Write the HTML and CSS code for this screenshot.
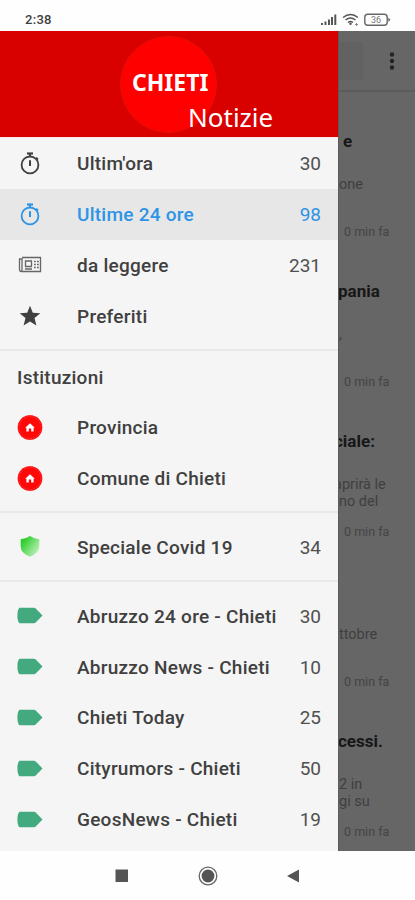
FILE: index.html
```html
<!DOCTYPE html>
<html lang="it">
<head>
<meta charset="utf-8">
<title>Chieti Notizie</title>
<link rel="stylesheet" href="styles.css">
</head>
<body>
<svg class="defs" width="0" height="0" aria-hidden="true">
  <defs>
    <linearGradient id="green" x1="0" y1="0" x2="1" y2="0.8"><stop offset="0.2" stop-color="#2dce2d"/><stop offset="1" stop-color="#c9f2c4"/></linearGradient>
    <symbol id="timer" viewBox="0 0 26 26"><g fill="none" stroke="currentColor"><circle cx="13" cy="14.900" r="8.400" stroke-width="1.800"/><path d="M10 3.500h6" stroke-width="2.200"/><path d="M13 3.500v3" stroke-width="2"/><path d="M13 10.300v5.600" stroke-width="2"/><path d="M19 7.700l2 1.800" stroke-width="2"/></g></symbol>
    <symbol id="home" viewBox="0 0 26 26"><circle cx="13" cy="12.500" r="12.500" fill="#f99"/><circle cx="13" cy="12.500" r="12.200" fill="#fe0808"/><circle cx="13" cy="12.500" r="11" fill="none" stroke="#ff5b5b" stroke-width=".5" stroke-dasharray="2 1"/><path d="M13 8.300l4.800 4.400h-1.200v3.900h-2.400v-3h-2.400v3H9.400v-3.900H8.200z" fill="#fff"/></symbol>
    <symbol id="tag" viewBox="0 0 26 26"><path d="M2.500 4.700H17q1 0 1.700.7l6.800 7.100-6.800 7.100q-.7.700-1.700.7H2.500Q.4 18.500.4 12.500t2.100-7.800z" fill="#42aa7e"/></symbol>
  </defs>
</svg>
<header class="status">
  <span class="clock">2:38</span>
  <svg class="status-icons" width="72" height="16" viewBox="0 0 72 16">
    <g fill="#555"><path d="M1 12h2v2H1z" /><path d="M4.500 10.500h2V14h-2z"/><path d="M8 8.500h2V14H8z"/><path d="M11 6h2v8h-2z"/><path d="M14.300 3.500h2V14h-2z"/></g>
    <g fill="none" stroke="#555" stroke-width="1.500"><path d="M23 6.500q7.500-6 15 0"/><path d="M25.500 9q5-4 10 0"/><path d="M28 11.500q2.500-2 5 0"/></g><circle cx="30.500" cy="12.700" r="1.200" fill="#555"/><path d="M36.500 12v3M35 13.500h3" stroke="#888"/>
    <rect x="44.800" y="3.300" width="22.400" height="11" rx="3" fill="none" stroke="#666" stroke-width="1.400"/><path d="M68.300 6.500l2.200 2.300-2.200 2.300z" fill="#666"/>
    <text x="56" y="12" class="battery">36</text>
  </svg>
</header>
<main class="screen">
  <nav class="drawer">
    <div class="brand"><div class="disc"><span class="city">CHIETI</span><span class="news">Notizie</span></div></div>
    <ul class="menu primary">
      <li class="item"><svg class="icon"><use href="#timer"/></svg><span>Ultim'ora</span><b class="count">30</b></li>
      <li class="item active"><svg class="icon"><use href="#timer"/></svg><span>Ultime 24 ore</span><b class="count">98</b></li>
      <li class="item"><svg class="icon" viewBox="0 0 26 26"><g fill="none" stroke="#666" stroke-width="1.300"><path d="M5 5.500h18.500v14H4.500q-2 0-2-2V7H5v10.500q0 2-1 2"/><path d="M8.500 9h6v5.500h-6z"/><path d="M17 9.500h1.800M20 9.500h1.800M17 12.500h1.800M20 12.500h1.800M17 15.500h1.800M20 15.500h1.800M8 17h7"/></g></svg><span>da leggere</span><b class="count">231</b></li>
      <li class="item"><svg class="icon" viewBox="0 0 26 26"><path d="M13 2.800l2.800 7 7.500.5-5.800 4.800 1.900 7.300L13 18.400l-6.400 4 1.900-7.300-5.800-4.800 7.500-.5z" fill="currentColor"/></svg><span>Preferiti</span></li>
    </ul>
    <ul class="menu institutions">
      <li class="heading">Istituzioni</li>
      <li class="item"><svg class="icon"><use href="#home"/></svg><span>Provincia</span></li>
      <li class="item"><svg class="icon"><use href="#home"/></svg><span>Comune di Chieti</span></li>
    </ul>
    <ul class="menu special">
      <li class="item"><svg class="icon" viewBox="0 0 26 26"><path d="M13 2q3.500 2.600 9.300 3.200v7q0 7-9.300 10.500-9.300-3.500-9.300-10.500v-7Q9.500 4.600 13 2z" fill="url(#green)"/></svg><span>Speciale Covid 19</span><b class="count">34</b></li>
    </ul>
    <ul class="menu sources">
      <li class="item"><svg class="icon"><use href="#tag"/></svg><span>Abruzzo 24 ore - Chieti</span><b class="count">30</b></li>
      <li class="item"><svg class="icon"><use href="#tag"/></svg><span>Abruzzo News - Chieti</span><b class="count">10</b></li>
      <li class="item"><svg class="icon"><use href="#tag"/></svg><span>Chieti Today</span><b class="count">25</b></li>
      <li class="item"><svg class="icon"><use href="#tag"/></svg><span>Cityrumors - Chieti</span><b class="count">50</b></li>
      <li class="item"><svg class="icon"><use href="#tag"/></svg><span>GeosNews - Chieti</span><b class="count">19</b></li>
    </ul>
  </nav>
  <section class="feed">
    <div class="toolbar"><span class="field"></span><svg width="8" height="22" viewBox="0 0 8 22" fill="#242424"><circle cx="4" cy="4.500" r="2.200"/><circle cx="4" cy="11" r="2.200"/><circle cx="4" cy="17.500" r="2.200"/></svg></div>
    <article class="story"><h2 class="in">e</h2><p>one</p><time>0 min fa</time></article>
    <article class="story"><h2>pania</h2><p>,</p><time>0 min fa</time></article>
    <article class="story"><h2 class="out">ciale:</h2><p class="out">aprirà le<br>rno del</p><time>0 min fa</time></article>
    <article class="story"><h2></h2><p>ttobre</p><time>0 min fa</time></article>
    <article class="story"><h2>cessi.</h2><p>2 in<br>gi su</p><time>0 min fa</time></article>
  </section>
</main>
<footer class="navbar">
  <svg width="14" height="14"><rect x="0.500" y="0.500" width="12.500" height="12.500" fill="#555"/></svg>
  <svg width="20" height="20"><circle cx="10" cy="10" r="8.800" fill="none" stroke="#666" stroke-width="1.300"/><circle cx="10" cy="10" r="6.400" fill="#555"/></svg>
  <svg width="14" height="14"><path d="M13 0.500v13L1 7z" fill="#555"/></svg>
</footer>
</body>
</html>
```
FILE: styles.css
```css
* { box-sizing: border-box; }
body { margin: 0; width: 415px; height: 900px; overflow: hidden; background: #fefefe; font-family: Roboto, "Liberation Sans", sans-serif; color: #404040; }
ul, h2, p { margin: 0; padding: 0; list-style: none; }
.defs { position: absolute; }
.status { height: 31px; padding: 9px 23px 0 25px; display: flex; justify-content: space-between; align-items: center; }
.clock { font-size: 13px; font-weight: 500; line-height: 20px; letter-spacing: .3px; }
.status-icons { margin-bottom: 3px; }
.battery { font-size: 9px; text-anchor: middle; fill: #777; }
.screen { height: 820px; display: grid; grid-template-columns: 338px 77px; overflow: hidden; }
.drawer { height: 820px; background: #f5f5f5; overflow: hidden; }
.brand { height: 107px; background: #d90000; padding: 5px 0 0 120px; border-bottom: 1px solid #ffe9e9; }
.disc { width: 97px; height: 97px; border-radius: 50%; background: #fe0000; border: 1px solid #e41005; color: #fff; white-space: nowrap; display: flex; flex-direction: column; }
.city { font: 700 23px/28px "Noto Sans", sans-serif; margin: 31px 0 0 11px; }
.news { font: 400 26px/32px "Noto Sans", sans-serif; margin: 5px 0 0 67px; }
.menu { border-bottom: 2px solid #e8e8e8; }
.primary { height: 213px; }
.institutions { height: 162px; }
.special { height: 69px; padding-top: 9px; }
.sources { border: 0; padding-top: 9px; }
.item { height: 50.800px; padding: 0 17px; display: flex; align-items: center; font-size: 19px; font-weight: 500; line-height: 24px; letter-spacing: .25px; }
.item span, .count { padding-top: 1px; }
.primary span, .primary .count { padding-top: 2px; }
.icon { width: 26px; height: 26px; margin-right: 34px; flex: none; }
.count { margin-left: auto; font-weight: 400; letter-spacing: 0; font-size: 19px; color: #505050; }
.active, .active .count { color: #2d94e6; }
.active { background: #e7e7e7; }
.heading { height: 51.500px; padding: 0 17px; font-size: 19px; line-height: 53px; font-weight: 500; letter-spacing: .25px; }
.feed { background: #666; border-left: 1px solid #5b5b5b; overflow: hidden; white-space: nowrap; }
.toolbar { height: 61px; margin-bottom: 25px; padding-right: 19px; border-bottom: 2px solid #5c5c5c; display: flex; align-items: center; justify-content: space-between; }
.field { width: 24px; height: 38px; background: #626262; }
.story { height: 150px; display: flex; flex-direction: column; }
.story h2 { height: 50px; font-size: 17px; line-height: 48px; font-weight: 700; color: #171717; margin-left: -1px; }
.story .in { margin-left: 4px; }
.story h2.out { margin-left: -5px; }
.story p { height: 48px; padding-top: 9px; font-size: 14.500px; line-height: 17px; color: #3f3f3f; }
.story p.out { margin-left: -5px; }
.story time { font-size: 12.500px; line-height: 34px; color: #444; margin-left: 5px; }
.navbar { height: 49px; padding: 0 115px; display: flex; align-items: center; justify-content: space-between; }
```
